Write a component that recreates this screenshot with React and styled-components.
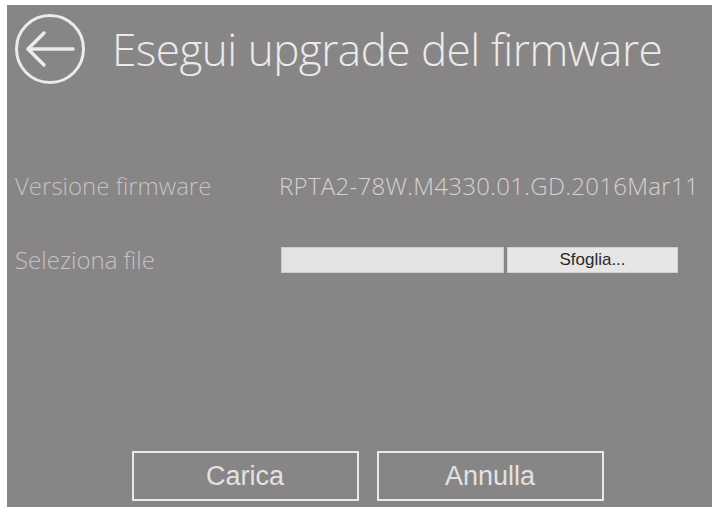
import styled, { createGlobalStyle } from "styled-components";

const GlobalStyle = createGlobalStyle`
  html, body {
    margin: 0;
    padding: 0;
    background: #ffffff;
    overflow: hidden;
  }
`;

const Panel = styled.div`
  margin: 5px 0 0 7px;
  height: 502px;
  background: #888586;
  display: flex;
  flex-direction: column;
  box-sizing: border-box;
  font-family: "Open Sans", "Noto Sans", sans-serif;
`;

const Header = styled.div`
  display: flex;
  align-items: center;
  gap: 26px;
  padding: 8px 0 0 7px;
  height: 72px;
`;

const BackButton = styled.button`
  width: 72px;
  height: 72px;
  padding: 0;
  border: none;
  background: none;
  cursor: pointer;
  svg {
    display: block;
  }
`;

const Title = styled.h1`
  margin: 0;
  font-size: 44px;
  font-weight: 300;
  color: #ebebeb;
  letter-spacing: -0.5px;
  white-space: nowrap;
`;

const Form = styled.div`
  display: grid;
  grid-template-columns: 264px 1fr;
  row-gap: 41px;
  align-items: center;
  padding: 84px 0 0 8px;
`;

const Label = styled.div`
  font-size: 24px;
  font-weight: 300;
  color: #c4c2c2;
  white-space: nowrap;
`;

const Value = styled.div`
  font-size: 24px;
  font-weight: 300;
  color: #d4d2d2;
  white-space: nowrap;
  letter-spacing: 0.3px;
`;

const FilePicker = styled.div`
  display: flex;
  gap: 3px;
  height: 26px;
  margin-left: 2px;
`;

const FileField = styled.div`
  width: 223px;
  background: #e3e3e3;
  border: 1px solid #cfcfcf;
  box-sizing: border-box;
`;

const BrowseButton = styled.button`
  width: 171px;
  background: #e6e6e6;
  border: 1px solid #d0d0d0;
  box-sizing: border-box;
  font-family: "Liberation Sans", Arial, sans-serif;
  font-size: 17px;
  color: #2a2a2a;
  padding: 0;
`;

const Actions = styled.div`
  margin-top: auto;
  display: flex;
  justify-content: center;
  gap: 18px;
  padding: 0 0 6px 16px;
`;

const ActionButton = styled.button`
  width: 227px;
  height: 50px;
  background: transparent;
  border: 2px solid #e9e9e9;
  box-sizing: border-box;
  font-family: "Liberation Sans", Arial, sans-serif;
  font-size: 27px;
  color: #e2e2e2;
  cursor: pointer;
`;

const BackIcon = () => (
  <svg width="72" height="72" viewBox="0 0 72 72" fill="none">
    <circle cx="36" cy="36" r="33.5" stroke="#ebebeb" strokeWidth="3" />
    <path
      d="M14 36 H59 M30 20 L14 36 L30 52"
      stroke="#ebebeb"
      strokeWidth="3.5"
      strokeLinecap="round"
      strokeLinejoin="round"
    />
  </svg>
);

export default function App() {
  return (
    <>
      <GlobalStyle />
      <Panel>
        <Header>
          <BackButton aria-label="Indietro">
            <BackIcon />
          </BackButton>
          <Title>Esegui upgrade del firmware</Title>
        </Header>
        <Form>
          <Label>Versione firmware</Label>
          <Value>RPTA2-78W.M4330.01.GD.2016Mar11</Value>
          <Label>Seleziona file</Label>
          <FilePicker>
            <FileField />
            <BrowseButton>Sfoglia...</BrowseButton>
          </FilePicker>
        </Form>
        <Actions>
          <ActionButton>Carica</ActionButton>
          <ActionButton>Annulla</ActionButton>
        </Actions>
      </Panel>
    </>
  );
}
